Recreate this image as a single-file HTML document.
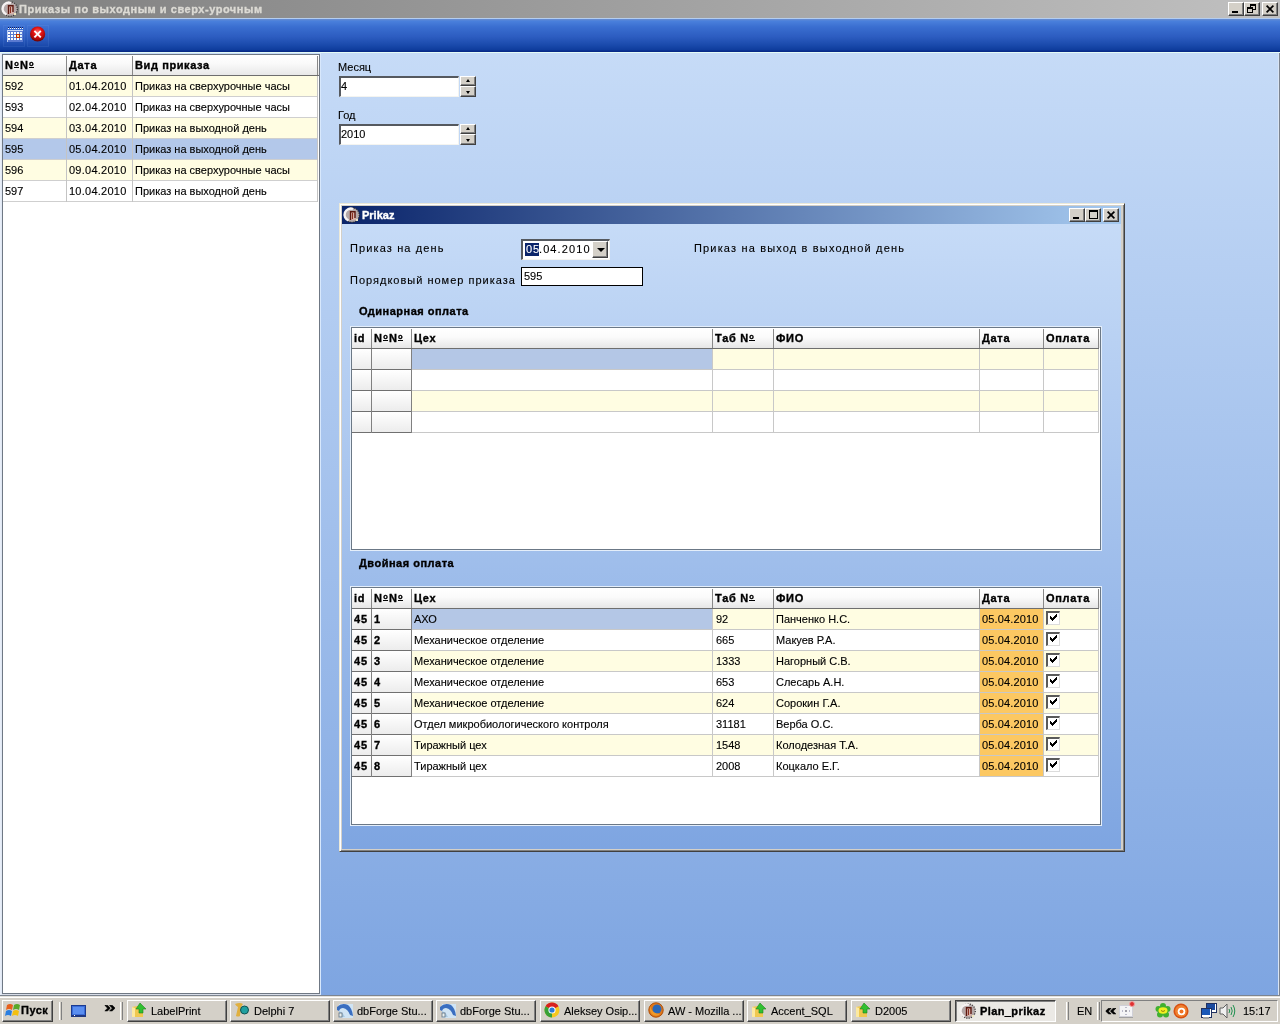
<!DOCTYPE html><html><head><meta charset="utf-8"><style>
html,body{margin:0;padding:0}
body{width:1280px;height:1024px;overflow:hidden;position:relative;font-family:"Liberation Sans",sans-serif;font-size:11px;color:#000;background:#7fa4e0}
div{position:absolute;box-sizing:border-box}
.t{white-space:nowrap;line-height:13px;height:13px;-webkit-text-stroke:0.12px currentColor}
.b{font-weight:bold}
.no{position:relative;display:inline-block;font-size:7.5px;line-height:5px;height:6px;border-bottom:1px solid currentColor;vertical-align:3px;margin-left:0.5px;margin-right:0.5px}
[style*="font-weight:bold"]{-webkit-text-stroke:0.35px currentColor}
.btn{background:#d4d0c8;border-top:1px solid #fff;border-left:1px solid #fff;border-right:1px solid #404040;border-bottom:1px solid #404040;box-shadow:inset -1px -1px 0 #808080}
svg{position:absolute;left:0;top:0;overflow:visible}
</style></head><body><div id="root" style="left:0;top:0;width:1280px;height:1024px;will-change:transform">
<div style="left:0px;top:0px;width:1280px;height:18px;background:linear-gradient(to right,#808080,#c0c0c0)"></div>
<div style="left:2px;top:1px;width:16px;height:16px;"><svg width="16" height="16"><circle cx="8" cy="8" r="7.3" fill="#b4a8a8" stroke="#2a2a2a" stroke-width="1.1" stroke-dasharray="1.2 1.2"/><path d="M4.5 13.5 A6 6 0 0 1 9 2" stroke="#f6f2f2" stroke-width="2.4" fill="none"/><rect x="5.5" y="4" width="6" height="9" fill="#d8b0a8"/><path d="M6.5 13 V4.8 H11 V11" stroke="#5a1810" stroke-width="1.4" fill="none"/><path d="M8.5 6 V12" stroke="#8a3020" stroke-width="1" fill="none"/><rect x="12" y="12" width="2" height="2" fill="#f0e8c0"/></svg></div>
<div class="t" style="left:19px;top:3px;font-weight:bold;color:#dcdad4;letter-spacing:0.53px">Приказы по выходным и сверх-урочным</div>
<div class="btn" style="left:1228px;top:2px;width:16px;height:14px"><div style="left:3px;top:8px;width:6px;height:2px;background:#000"></div></div>
<div class="btn" style="left:1244px;top:2px;width:16px;height:14px"><div style="left:5px;top:1px;width:6px;height:6px;border:1px solid #000;border-top-width:2px"></div><div style="left:2px;top:4px;width:6px;height:6px;border:1px solid #000;border-top-width:2px;background:#d4d0c8"></div></div>
<div class="btn" style="left:1262px;top:2px;width:16px;height:14px"><svg width="16" height="14"><path d="M3.6 2.6 L10.4 9.4 M10.4 2.6 L3.6 9.4" stroke="#000" stroke-width="1.7" fill="none"/></svg></div>
<div style="left:0px;top:18px;width:1280px;height:1px;background:#b4cdf0"></div>
<div style="left:0px;top:19px;width:1280px;height:33px;background:linear-gradient(to bottom,#6a8ed0 0,#4a80dc 2px,#3a6ed0 8px,#2c5cc0 18px,#1a4aac 26px,#0e3c9c 31px,#082a88 32px,#082a88 33px)"></div>
<div style="left:0px;top:52px;width:1280px;height:1px;background:#e4fbf6"></div>
<div style="left:3px;top:25px;width:22px;height:22px;border:1px solid rgba(160,200,255,0.09);background:rgba(120,170,255,0.03)"></div>
<div style="left:27px;top:25px;width:22px;height:22px;border:1px solid rgba(160,200,255,0.09);background:rgba(120,170,255,0.03)"></div>
<div style="left:7px;top:27px;width:18px;height:16px;"><svg width="18" height="16" shape-rendering="crispEdges"><rect x="1" y="0" width="1" height="1" fill="#0a1a60"/><rect x="1" y="1" width="1" height="1" fill="#ffffff"/><rect x="3" y="0" width="1" height="1" fill="#0a1a60"/><rect x="3" y="1" width="1" height="1" fill="#ffffff"/><rect x="5" y="0" width="1" height="1" fill="#0a1a60"/><rect x="5" y="1" width="1" height="1" fill="#ffffff"/><rect x="7" y="0" width="1" height="1" fill="#0a1a60"/><rect x="7" y="1" width="1" height="1" fill="#ffffff"/><rect x="9" y="0" width="1" height="1" fill="#0a1a60"/><rect x="9" y="1" width="1" height="1" fill="#ffffff"/><rect x="11" y="0" width="1" height="1" fill="#0a1a60"/><rect x="11" y="1" width="1" height="1" fill="#ffffff"/><rect x="13" y="0" width="1" height="1" fill="#0a1a60"/><rect x="13" y="1" width="1" height="1" fill="#ffffff"/><rect x="15" y="0" width="1" height="1" fill="#0a1a60"/><rect x="15" y="1" width="1" height="1" fill="#ffffff"/><rect x="0" y="3" width="16" height="1" fill="#c8d8f8"/><rect x="0" y="3" width="1" height="12" fill="#b8ccf0"/><rect x="1" y="4" width="15" height="11" fill="#5a7ad0"/><rect x="1" y="5" width="2" height="2" fill="#ffffff"/><rect x="4" y="5" width="2" height="2" fill="#ffffff"/><rect x="7" y="5" width="2" height="2" fill="#ffffff"/><rect x="10" y="5" width="2" height="2" fill="#ffffff"/><rect x="13" y="5" width="2" height="2" fill="#e0f4ff"/><rect x="1" y="8" width="2" height="2" fill="#ffffff"/><rect x="4" y="8" width="2" height="2" fill="#ffffff"/><rect x="7" y="8" width="2" height="2" fill="#ffffff"/><rect x="10" y="8" width="2" height="2" fill="#f8e0a0"/><rect x="13" y="8" width="2" height="2" fill="#e0f4ff"/><rect x="1" y="11" width="2" height="2" fill="#ffffff"/><rect x="4" y="11" width="2" height="2" fill="#ffffff"/><rect x="7" y="11" width="2" height="2" fill="#ffffff"/><rect x="10" y="11" width="2" height="2" fill="#ffffff"/><rect x="13" y="11" width="2" height="2" fill="#e0f4ff"/><rect x="10" y="7" width="3" height="1" fill="#c03000"/><rect x="10" y="10" width="3" height="1" fill="#c03000"/><rect x="9" y="7" width="1" height="4" fill="#c03000"/><rect x="12" y="7" width="1" height="4" fill="#c03000"/></svg></div>
<div style="left:30px;top:26px;width:16px;height:16px;"><svg width="16" height="16"><defs><radialGradient id="rg" cx="50%" cy="35%" r="60%"><stop offset="0" stop-color="#ff6a6a"/><stop offset="0.45" stop-color="#e41414"/><stop offset="0.85" stop-color="#a80808"/><stop offset="1" stop-color="#700404"/></radialGradient></defs><circle cx="7.6" cy="8" r="7.6" fill="url(#rg)"/><path d="M4.4 4.8 L10.8 11.4 M10.8 4.8 L4.4 11.4" stroke="#fff" stroke-width="1.9" fill="none"/></svg></div>
<div style="left:0px;top:53px;width:1280px;height:942px;background:linear-gradient(to bottom,#c6dbf7 0,#7ea5e1 100%)"></div>
<div style="left:1278px;top:53px;width:1px;height:942px;background:#d8e4f4"></div>
<div style="left:1279px;top:53px;width:1px;height:943px;background:#7c8490"></div>
<div style="left:0px;top:995px;width:1280px;height:1px;background:#7c8490"></div>
<div style="left:0px;top:53px;width:1px;height:942px;background:#e8eef8"></div>
<div style="left:1px;top:53px;width:1px;height:942px;background:#e0e8f4"></div>
<div style="left:2px;top:54px;width:318px;height:940px;background:#fff;border:1px solid #6f7884"></div>
<div style="left:320px;top:53px;width:1px;height:942px;background:#d8e8fc"></div>
<div style="left:2px;top:994px;width:318px;height:1px;background:#d8dde8"></div>
<div style="left:3px;top:55px;width:316px;height:20px;background:linear-gradient(to bottom,#ffffff 0,#fafafa 40%,#e8e8e8 100%)"></div>
<div style="left:3px;top:75px;width:316px;height:1px;background:#6e6e6e"></div>
<div style="left:66px;top:56px;width:1px;height:19px;background:#888"></div>
<div style="left:132px;top:56px;width:1px;height:19px;background:#888"></div>
<div style="left:317px;top:56px;width:1px;height:19px;background:#888"></div>
<div class="t" style="left:5px;top:59px;font-weight:bold;letter-spacing:0.7px">N<span class='no'>o</span>N<span class='no'>o</span></div>
<div class="t" style="left:69px;top:59px;font-weight:bold;letter-spacing:0.7px">Дата</div>
<div class="t" style="left:135px;top:59px;font-weight:bold;letter-spacing:0.6px">Вид приказа</div>
<div style="left:3px;top:76px;width:314px;height:20px;background:#fffde2"></div>
<div style="left:3px;top:96px;width:315px;height:1px;background:#cfcfcf"></div>
<div style="left:66px;top:76px;width:1px;height:21px;background:#c4c4c4"></div>
<div style="left:132px;top:76px;width:1px;height:21px;background:#c4c4c4"></div>
<div style="left:317px;top:76px;width:1px;height:21px;background:#c4c4c4"></div>
<div class="t" style="left:5px;top:80px;">592</div>
<div class="t" style="left:69px;top:80px;letter-spacing:0.25px">01.04.2010</div>
<div class="t" style="left:135px;top:80px;">Приказ на сверхурочные часы</div>
<div style="left:3px;top:97px;width:314px;height:20px;background:#ffffff"></div>
<div style="left:3px;top:117px;width:315px;height:1px;background:#cfcfcf"></div>
<div style="left:66px;top:97px;width:1px;height:21px;background:#c4c4c4"></div>
<div style="left:132px;top:97px;width:1px;height:21px;background:#c4c4c4"></div>
<div style="left:317px;top:97px;width:1px;height:21px;background:#c4c4c4"></div>
<div class="t" style="left:5px;top:101px;">593</div>
<div class="t" style="left:69px;top:101px;letter-spacing:0.25px">02.04.2010</div>
<div class="t" style="left:135px;top:101px;">Приказ на сверхурочные часы</div>
<div style="left:3px;top:118px;width:314px;height:20px;background:#fffde2"></div>
<div style="left:3px;top:138px;width:315px;height:1px;background:#cfcfcf"></div>
<div style="left:66px;top:118px;width:1px;height:21px;background:#c4c4c4"></div>
<div style="left:132px;top:118px;width:1px;height:21px;background:#c4c4c4"></div>
<div style="left:317px;top:118px;width:1px;height:21px;background:#c4c4c4"></div>
<div class="t" style="left:5px;top:122px;">594</div>
<div class="t" style="left:69px;top:122px;letter-spacing:0.25px">03.04.2010</div>
<div class="t" style="left:135px;top:122px;">Приказ на выходной день</div>
<div style="left:3px;top:139px;width:314px;height:20px;background:#b3c8ea"></div>
<div style="left:3px;top:159px;width:315px;height:1px;background:#cfcfcf"></div>
<div style="left:66px;top:139px;width:1px;height:21px;background:#c4c4c4"></div>
<div style="left:132px;top:139px;width:1px;height:21px;background:#c4c4c4"></div>
<div style="left:317px;top:139px;width:1px;height:21px;background:#c4c4c4"></div>
<div class="t" style="left:5px;top:143px;">595</div>
<div class="t" style="left:69px;top:143px;letter-spacing:0.25px">05.04.2010</div>
<div class="t" style="left:135px;top:143px;">Приказ на выходной день</div>
<div style="left:3px;top:160px;width:314px;height:20px;background:#fffde2"></div>
<div style="left:3px;top:180px;width:315px;height:1px;background:#cfcfcf"></div>
<div style="left:66px;top:160px;width:1px;height:21px;background:#c4c4c4"></div>
<div style="left:132px;top:160px;width:1px;height:21px;background:#c4c4c4"></div>
<div style="left:317px;top:160px;width:1px;height:21px;background:#c4c4c4"></div>
<div class="t" style="left:5px;top:164px;">596</div>
<div class="t" style="left:69px;top:164px;letter-spacing:0.25px">09.04.2010</div>
<div class="t" style="left:135px;top:164px;">Приказ на сверхурочные часы</div>
<div style="left:3px;top:181px;width:314px;height:20px;background:#ffffff"></div>
<div style="left:3px;top:201px;width:315px;height:1px;background:#cfcfcf"></div>
<div style="left:66px;top:181px;width:1px;height:21px;background:#c4c4c4"></div>
<div style="left:132px;top:181px;width:1px;height:21px;background:#c4c4c4"></div>
<div style="left:317px;top:181px;width:1px;height:21px;background:#c4c4c4"></div>
<div class="t" style="left:5px;top:185px;">597</div>
<div class="t" style="left:69px;top:185px;letter-spacing:0.25px">10.04.2010</div>
<div class="t" style="left:135px;top:185px;">Приказ на выходной день</div>
<div class="t" style="left:338px;top:61px;">Месяц</div>
<div style="left:339px;top:76px;width:120px;height:21px;background:#fff;border-top:2px solid #55595f;border-left:2px solid #55595f;border-bottom:1px solid #f4f4f0;border-right:1px solid #f4f4f0"></div>
<div class="t" style="left:341px;top:80px;">4</div>
<div class="btn" style="left:460px;top:76px;width:16px;height:10px"><div style="left:5px;top:2px;width:0;height:0;border-left:2.5px solid transparent;border-right:2.5px solid transparent;border-bottom:3px solid #000"></div></div>
<div class="btn" style="left:460px;top:86px;width:16px;height:11px"><div style="left:5px;top:4px;width:0;height:0;border-left:2.5px solid transparent;border-right:2.5px solid transparent;border-top:3px solid #000"></div></div>
<div class="t" style="left:338px;top:109px;">Год</div>
<div style="left:339px;top:124px;width:120px;height:21px;background:#fff;border-top:2px solid #55595f;border-left:2px solid #55595f;border-bottom:1px solid #f4f4f0;border-right:1px solid #f4f4f0"></div>
<div class="t" style="left:341px;top:128px;">2010</div>
<div class="btn" style="left:460px;top:124px;width:16px;height:10px"><div style="left:5px;top:2px;width:0;height:0;border-left:2.5px solid transparent;border-right:2.5px solid transparent;border-bottom:3px solid #000"></div></div>
<div class="btn" style="left:460px;top:134px;width:16px;height:11px"><div style="left:5px;top:4px;width:0;height:0;border-left:2.5px solid transparent;border-right:2.5px solid transparent;border-top:3px solid #000"></div></div>
<div style="left:339px;top:203px;width:786px;height:649px;background:#d4d0c8;border-top:1px solid #ece9d8;border-left:1px solid #ece9d8;border-right:1px solid #404040;border-bottom:1px solid #404040;box-shadow:inset 1px 1px 0 #fff, inset -1px -1px 0 #808080"></div>
<div style="left:342px;top:206px;width:779px;height:18px;background:linear-gradient(to right,#0a246a,#a6caf0)"></div>
<div style="left:344px;top:207px;width:16px;height:16px;"><svg width="16" height="16"><circle cx="8" cy="8" r="7.3" fill="#b4a8a8" stroke="#2a2a2a" stroke-width="1.1" stroke-dasharray="1.2 1.2"/><path d="M4.5 13.5 A6 6 0 0 1 9 2" stroke="#f6f2f2" stroke-width="2.4" fill="none"/><rect x="5.5" y="4" width="6" height="9" fill="#d8b0a8"/><path d="M6.5 13 V4.8 H11 V11" stroke="#5a1810" stroke-width="1.4" fill="none"/><path d="M8.5 6 V12" stroke="#8a3020" stroke-width="1" fill="none"/><rect x="12" y="12" width="2" height="2" fill="#f0e8c0"/></svg></div>
<div class="t" style="left:362px;top:209px;font-weight:bold;color:#fff;font-size:11px">Prikaz</div>
<div class="btn" style="left:1069px;top:208px;width:16px;height:14px"><div style="left:3px;top:8px;width:6px;height:2px;background:#000"></div></div>
<div class="btn" style="left:1085px;top:208px;width:16px;height:14px"><div style="left:3px;top:1px;width:9px;height:9px;border:1px solid #000;border-top-width:2px"></div></div>
<div class="btn" style="left:1103px;top:208px;width:16px;height:14px"><svg width="16" height="14"><path d="M3.6 2.6 L10.4 9.4 M10.4 2.6 L3.6 9.4" stroke="#000" stroke-width="1.7" fill="none"/></svg></div>
<div style="left:342px;top:224px;width:779px;height:625px;background:linear-gradient(to bottom,#c6dbf7 0,#7ea5e1 100%)"></div>
<div class="t" style="left:350px;top:242px;letter-spacing:1.12px">Приказ на день</div>
<div class="t" style="left:350px;top:274px;letter-spacing:1px">Порядковый номер приказа</div>
<div class="t" style="left:694px;top:242px;letter-spacing:1.16px">Приказ на выход в выходной день</div>
<div style="left:521px;top:239px;width:89px;height:21px;background:#fff;border-top:2px solid #55595f;border-left:2px solid #55595f;border-bottom:1px solid #f4f4f0;border-right:1px solid #f4f4f0"></div>
<div style="left:525px;top:243px;width:14px;height:13px;background:#0a246a"></div>
<div class="t" style="left:526px;top:243px;color:#fff;letter-spacing:1px">05</div>
<div class="t" style="left:539px;top:243px;letter-spacing:1.1px">.04.2010</div>
<div class="btn" style="left:592px;top:241px;width:16px;height:17px"><div style="left:3.5px;top:6px;width:0;height:0;border-left:4px solid transparent;border-right:4px solid transparent;border-top:4px solid #000"></div></div>
<div style="left:521px;top:267px;width:122px;height:19px;background:#fff;border:1px solid #000"></div>
<div class="t" style="left:524px;top:270px;">595</div>
<div class="t" style="left:359px;top:305px;font-weight:bold;letter-spacing:0.5px">Одинарная оплата</div>
<div style="left:350px;top:326px;width:752px;height:225px;background:#e4eefa"></div>
<div style="left:351px;top:327px;width:750px;height:223px;background:#fff;border:1px solid #6b7886"></div>
<div style="left:352px;top:328px;width:748px;height:20px;background:linear-gradient(to bottom,#ffffff 0,#fbfbfb 45%,#e6e6e6 100%)"></div>
<div style="left:352px;top:348px;width:747px;height:1px;background:#6e6e6e"></div>
<div style="left:371px;top:329px;width:1px;height:19px;background:#888"></div>
<div style="left:411px;top:329px;width:1px;height:19px;background:#888"></div>
<div style="left:712px;top:329px;width:1px;height:19px;background:#888"></div>
<div style="left:773px;top:329px;width:1px;height:19px;background:#888"></div>
<div style="left:979px;top:329px;width:1px;height:19px;background:#888"></div>
<div style="left:1043px;top:329px;width:1px;height:19px;background:#888"></div>
<div style="left:1098px;top:329px;width:1px;height:19px;background:#888"></div>
<div class="t" style="left:354px;top:332px;font-weight:bold;letter-spacing:0.7px">id</div>
<div class="t" style="left:374px;top:332px;font-weight:bold;letter-spacing:0.7px">N<span class='no'>o</span>N<span class='no'>o</span></div>
<div class="t" style="left:414px;top:332px;font-weight:bold;letter-spacing:0.7px">Цех</div>
<div class="t" style="left:715px;top:332px;font-weight:bold;letter-spacing:0.7px">Таб N<span class='no'>o</span></div>
<div class="t" style="left:776px;top:332px;font-weight:bold;letter-spacing:0.7px">ФИО</div>
<div class="t" style="left:982px;top:332px;font-weight:bold;letter-spacing:0.7px">Дата</div>
<div class="t" style="left:1046px;top:332px;font-weight:bold;letter-spacing:0.7px">Оплата</div>
<div style="left:411px;top:349px;width:687px;height:20px;background:#fffde2"></div>
<div style="left:352px;top:349px;width:19px;height:20px;background:linear-gradient(to bottom,#ffffff,#ececec)"></div>
<div style="left:372px;top:349px;width:39px;height:20px;background:linear-gradient(to bottom,#ffffff,#ececec)"></div>
<div style="left:352px;top:369px;width:747px;height:1px;background:#c8c8c8"></div>
<div style="left:352px;top:369px;width:59px;height:1px;background:#707070"></div>
<div style="left:371px;top:349px;width:1px;height:21px;background:#808080"></div>
<div style="left:411px;top:349px;width:1px;height:21px;background:#808080"></div>
<div style="left:712px;top:349px;width:1px;height:21px;background:#c8c8c8"></div>
<div style="left:773px;top:349px;width:1px;height:21px;background:#c8c8c8"></div>
<div style="left:979px;top:349px;width:1px;height:21px;background:#c8c8c8"></div>
<div style="left:1043px;top:349px;width:1px;height:21px;background:#c8c8c8"></div>
<div style="left:1098px;top:349px;width:1px;height:21px;background:#c8c8c8"></div>
<div style="left:411px;top:370px;width:687px;height:20px;background:#ffffff"></div>
<div style="left:352px;top:370px;width:19px;height:20px;background:linear-gradient(to bottom,#ffffff,#ececec)"></div>
<div style="left:372px;top:370px;width:39px;height:20px;background:linear-gradient(to bottom,#ffffff,#ececec)"></div>
<div style="left:352px;top:390px;width:747px;height:1px;background:#c8c8c8"></div>
<div style="left:352px;top:390px;width:59px;height:1px;background:#707070"></div>
<div style="left:371px;top:370px;width:1px;height:21px;background:#808080"></div>
<div style="left:411px;top:370px;width:1px;height:21px;background:#808080"></div>
<div style="left:712px;top:370px;width:1px;height:21px;background:#c8c8c8"></div>
<div style="left:773px;top:370px;width:1px;height:21px;background:#c8c8c8"></div>
<div style="left:979px;top:370px;width:1px;height:21px;background:#c8c8c8"></div>
<div style="left:1043px;top:370px;width:1px;height:21px;background:#c8c8c8"></div>
<div style="left:1098px;top:370px;width:1px;height:21px;background:#c8c8c8"></div>
<div style="left:411px;top:391px;width:687px;height:20px;background:#fffde2"></div>
<div style="left:352px;top:391px;width:19px;height:20px;background:linear-gradient(to bottom,#ffffff,#ececec)"></div>
<div style="left:372px;top:391px;width:39px;height:20px;background:linear-gradient(to bottom,#ffffff,#ececec)"></div>
<div style="left:352px;top:411px;width:747px;height:1px;background:#c8c8c8"></div>
<div style="left:352px;top:411px;width:59px;height:1px;background:#707070"></div>
<div style="left:371px;top:391px;width:1px;height:21px;background:#808080"></div>
<div style="left:411px;top:391px;width:1px;height:21px;background:#808080"></div>
<div style="left:712px;top:391px;width:1px;height:21px;background:#c8c8c8"></div>
<div style="left:773px;top:391px;width:1px;height:21px;background:#c8c8c8"></div>
<div style="left:979px;top:391px;width:1px;height:21px;background:#c8c8c8"></div>
<div style="left:1043px;top:391px;width:1px;height:21px;background:#c8c8c8"></div>
<div style="left:1098px;top:391px;width:1px;height:21px;background:#c8c8c8"></div>
<div style="left:411px;top:412px;width:687px;height:20px;background:#ffffff"></div>
<div style="left:352px;top:412px;width:19px;height:20px;background:linear-gradient(to bottom,#ffffff,#ececec)"></div>
<div style="left:372px;top:412px;width:39px;height:20px;background:linear-gradient(to bottom,#ffffff,#ececec)"></div>
<div style="left:352px;top:432px;width:747px;height:1px;background:#c8c8c8"></div>
<div style="left:352px;top:432px;width:59px;height:1px;background:#707070"></div>
<div style="left:371px;top:412px;width:1px;height:21px;background:#808080"></div>
<div style="left:411px;top:412px;width:1px;height:21px;background:#808080"></div>
<div style="left:712px;top:412px;width:1px;height:21px;background:#c8c8c8"></div>
<div style="left:773px;top:412px;width:1px;height:21px;background:#c8c8c8"></div>
<div style="left:979px;top:412px;width:1px;height:21px;background:#c8c8c8"></div>
<div style="left:1043px;top:412px;width:1px;height:21px;background:#c8c8c8"></div>
<div style="left:1098px;top:412px;width:1px;height:21px;background:#c8c8c8"></div>
<div style="left:412px;top:349px;width:300px;height:20px;background:#b4c7e6"></div>
<div class="t" style="left:359px;top:557px;font-weight:bold;letter-spacing:0.5px">Двойная оплата</div>
<div style="left:350px;top:586px;width:752px;height:240px;background:#e4eefa"></div>
<div style="left:351px;top:587px;width:750px;height:238px;background:#fff;border:1px solid #6b7886"></div>
<div style="left:352px;top:588px;width:748px;height:20px;background:linear-gradient(to bottom,#ffffff 0,#fbfbfb 45%,#e6e6e6 100%)"></div>
<div style="left:352px;top:608px;width:747px;height:1px;background:#6e6e6e"></div>
<div style="left:371px;top:589px;width:1px;height:19px;background:#888"></div>
<div style="left:411px;top:589px;width:1px;height:19px;background:#888"></div>
<div style="left:712px;top:589px;width:1px;height:19px;background:#888"></div>
<div style="left:773px;top:589px;width:1px;height:19px;background:#888"></div>
<div style="left:979px;top:589px;width:1px;height:19px;background:#888"></div>
<div style="left:1043px;top:589px;width:1px;height:19px;background:#888"></div>
<div style="left:1098px;top:589px;width:1px;height:19px;background:#888"></div>
<div class="t" style="left:354px;top:592px;font-weight:bold;letter-spacing:0.7px">id</div>
<div class="t" style="left:374px;top:592px;font-weight:bold;letter-spacing:0.7px">N<span class='no'>o</span>N<span class='no'>o</span></div>
<div class="t" style="left:414px;top:592px;font-weight:bold;letter-spacing:0.7px">Цех</div>
<div class="t" style="left:715px;top:592px;font-weight:bold;letter-spacing:0.7px">Таб N<span class='no'>o</span></div>
<div class="t" style="left:776px;top:592px;font-weight:bold;letter-spacing:0.7px">ФИО</div>
<div class="t" style="left:982px;top:592px;font-weight:bold;letter-spacing:0.7px">Дата</div>
<div class="t" style="left:1046px;top:592px;font-weight:bold;letter-spacing:0.7px">Оплата</div>
<div style="left:411px;top:609px;width:687px;height:20px;background:#fffde2"></div>
<div style="left:352px;top:609px;width:19px;height:20px;background:linear-gradient(to bottom,#ffffff,#ececec)"></div>
<div style="left:372px;top:609px;width:39px;height:20px;background:linear-gradient(to bottom,#ffffff,#ececec)"></div>
<div style="left:352px;top:629px;width:747px;height:1px;background:#c8c8c8"></div>
<div style="left:352px;top:629px;width:59px;height:1px;background:#707070"></div>
<div style="left:371px;top:609px;width:1px;height:21px;background:#808080"></div>
<div style="left:411px;top:609px;width:1px;height:21px;background:#808080"></div>
<div style="left:712px;top:609px;width:1px;height:21px;background:#c8c8c8"></div>
<div style="left:773px;top:609px;width:1px;height:21px;background:#c8c8c8"></div>
<div style="left:979px;top:609px;width:1px;height:21px;background:#c8c8c8"></div>
<div style="left:1043px;top:609px;width:1px;height:21px;background:#c8c8c8"></div>
<div style="left:1098px;top:609px;width:1px;height:21px;background:#c8c8c8"></div>
<div style="left:980px;top:609px;width:63px;height:20px;background:#fcc862"></div>
<div class="t" style="left:354px;top:613px;font-weight:bold;letter-spacing:0.8px">45</div>
<div class="t" style="left:374px;top:613px;font-weight:bold">1</div>
<div class="t" style="left:414px;top:613px;">АХО</div>
<div class="t" style="left:716px;top:613px;">92</div>
<div class="t" style="left:776px;top:613px;">Панченко Н.С.</div>
<div class="t" style="left:982px;top:613px;letter-spacing:0.15px">05.04.2010</div>
<div style="left:1046px;top:611px;width:14px;height:14px;background:#fff;border-top:2px solid #5a5a5a;border-left:2px solid #5a5a5a;border-right:1px solid #dcdcdc;border-bottom:1px solid #dcdcdc"><svg width="7" height="7" style="left:2px;top:1px" shape-rendering="crispEdges" fill="#000"><rect x="6" y="0" width="1" height="1"/><rect x="5" y="1" width="1" height="1"/><rect x="6" y="1" width="1" height="1"/><rect x="0" y="2" width="1" height="1"/><rect x="4" y="2" width="1" height="1"/><rect x="5" y="2" width="1" height="1"/><rect x="6" y="2" width="1" height="1"/><rect x="0" y="3" width="1" height="1"/><rect x="1" y="3" width="1" height="1"/><rect x="3" y="3" width="1" height="1"/><rect x="4" y="3" width="1" height="1"/><rect x="5" y="3" width="1" height="1"/><rect x="0" y="4" width="1" height="1"/><rect x="1" y="4" width="1" height="1"/><rect x="2" y="4" width="1" height="1"/><rect x="3" y="4" width="1" height="1"/><rect x="4" y="4" width="1" height="1"/><rect x="1" y="5" width="1" height="1"/><rect x="2" y="5" width="1" height="1"/><rect x="3" y="5" width="1" height="1"/><rect x="2" y="6" width="1" height="1"/></svg></div>
<div style="left:411px;top:630px;width:687px;height:20px;background:#ffffff"></div>
<div style="left:352px;top:630px;width:19px;height:20px;background:linear-gradient(to bottom,#ffffff,#ececec)"></div>
<div style="left:372px;top:630px;width:39px;height:20px;background:linear-gradient(to bottom,#ffffff,#ececec)"></div>
<div style="left:352px;top:650px;width:747px;height:1px;background:#c8c8c8"></div>
<div style="left:352px;top:650px;width:59px;height:1px;background:#707070"></div>
<div style="left:371px;top:630px;width:1px;height:21px;background:#808080"></div>
<div style="left:411px;top:630px;width:1px;height:21px;background:#808080"></div>
<div style="left:712px;top:630px;width:1px;height:21px;background:#c8c8c8"></div>
<div style="left:773px;top:630px;width:1px;height:21px;background:#c8c8c8"></div>
<div style="left:979px;top:630px;width:1px;height:21px;background:#c8c8c8"></div>
<div style="left:1043px;top:630px;width:1px;height:21px;background:#c8c8c8"></div>
<div style="left:1098px;top:630px;width:1px;height:21px;background:#c8c8c8"></div>
<div style="left:980px;top:630px;width:63px;height:20px;background:#fcc862"></div>
<div class="t" style="left:354px;top:634px;font-weight:bold;letter-spacing:0.8px">45</div>
<div class="t" style="left:374px;top:634px;font-weight:bold">2</div>
<div class="t" style="left:414px;top:634px;">Механическое отделение</div>
<div class="t" style="left:716px;top:634px;">665</div>
<div class="t" style="left:776px;top:634px;">Макуев Р.А.</div>
<div class="t" style="left:982px;top:634px;letter-spacing:0.15px">05.04.2010</div>
<div style="left:1046px;top:632px;width:14px;height:14px;background:#fff;border-top:2px solid #5a5a5a;border-left:2px solid #5a5a5a;border-right:1px solid #dcdcdc;border-bottom:1px solid #dcdcdc"><svg width="7" height="7" style="left:2px;top:1px" shape-rendering="crispEdges" fill="#000"><rect x="6" y="0" width="1" height="1"/><rect x="5" y="1" width="1" height="1"/><rect x="6" y="1" width="1" height="1"/><rect x="0" y="2" width="1" height="1"/><rect x="4" y="2" width="1" height="1"/><rect x="5" y="2" width="1" height="1"/><rect x="6" y="2" width="1" height="1"/><rect x="0" y="3" width="1" height="1"/><rect x="1" y="3" width="1" height="1"/><rect x="3" y="3" width="1" height="1"/><rect x="4" y="3" width="1" height="1"/><rect x="5" y="3" width="1" height="1"/><rect x="0" y="4" width="1" height="1"/><rect x="1" y="4" width="1" height="1"/><rect x="2" y="4" width="1" height="1"/><rect x="3" y="4" width="1" height="1"/><rect x="4" y="4" width="1" height="1"/><rect x="1" y="5" width="1" height="1"/><rect x="2" y="5" width="1" height="1"/><rect x="3" y="5" width="1" height="1"/><rect x="2" y="6" width="1" height="1"/></svg></div>
<div style="left:411px;top:651px;width:687px;height:20px;background:#fffde2"></div>
<div style="left:352px;top:651px;width:19px;height:20px;background:linear-gradient(to bottom,#ffffff,#ececec)"></div>
<div style="left:372px;top:651px;width:39px;height:20px;background:linear-gradient(to bottom,#ffffff,#ececec)"></div>
<div style="left:352px;top:671px;width:747px;height:1px;background:#c8c8c8"></div>
<div style="left:352px;top:671px;width:59px;height:1px;background:#707070"></div>
<div style="left:371px;top:651px;width:1px;height:21px;background:#808080"></div>
<div style="left:411px;top:651px;width:1px;height:21px;background:#808080"></div>
<div style="left:712px;top:651px;width:1px;height:21px;background:#c8c8c8"></div>
<div style="left:773px;top:651px;width:1px;height:21px;background:#c8c8c8"></div>
<div style="left:979px;top:651px;width:1px;height:21px;background:#c8c8c8"></div>
<div style="left:1043px;top:651px;width:1px;height:21px;background:#c8c8c8"></div>
<div style="left:1098px;top:651px;width:1px;height:21px;background:#c8c8c8"></div>
<div style="left:980px;top:651px;width:63px;height:20px;background:#fcc862"></div>
<div class="t" style="left:354px;top:655px;font-weight:bold;letter-spacing:0.8px">45</div>
<div class="t" style="left:374px;top:655px;font-weight:bold">3</div>
<div class="t" style="left:414px;top:655px;">Механическое отделение</div>
<div class="t" style="left:716px;top:655px;">1333</div>
<div class="t" style="left:776px;top:655px;">Нагорный С.В.</div>
<div class="t" style="left:982px;top:655px;letter-spacing:0.15px">05.04.2010</div>
<div style="left:1046px;top:653px;width:14px;height:14px;background:#fff;border-top:2px solid #5a5a5a;border-left:2px solid #5a5a5a;border-right:1px solid #dcdcdc;border-bottom:1px solid #dcdcdc"><svg width="7" height="7" style="left:2px;top:1px" shape-rendering="crispEdges" fill="#000"><rect x="6" y="0" width="1" height="1"/><rect x="5" y="1" width="1" height="1"/><rect x="6" y="1" width="1" height="1"/><rect x="0" y="2" width="1" height="1"/><rect x="4" y="2" width="1" height="1"/><rect x="5" y="2" width="1" height="1"/><rect x="6" y="2" width="1" height="1"/><rect x="0" y="3" width="1" height="1"/><rect x="1" y="3" width="1" height="1"/><rect x="3" y="3" width="1" height="1"/><rect x="4" y="3" width="1" height="1"/><rect x="5" y="3" width="1" height="1"/><rect x="0" y="4" width="1" height="1"/><rect x="1" y="4" width="1" height="1"/><rect x="2" y="4" width="1" height="1"/><rect x="3" y="4" width="1" height="1"/><rect x="4" y="4" width="1" height="1"/><rect x="1" y="5" width="1" height="1"/><rect x="2" y="5" width="1" height="1"/><rect x="3" y="5" width="1" height="1"/><rect x="2" y="6" width="1" height="1"/></svg></div>
<div style="left:411px;top:672px;width:687px;height:20px;background:#ffffff"></div>
<div style="left:352px;top:672px;width:19px;height:20px;background:linear-gradient(to bottom,#ffffff,#ececec)"></div>
<div style="left:372px;top:672px;width:39px;height:20px;background:linear-gradient(to bottom,#ffffff,#ececec)"></div>
<div style="left:352px;top:692px;width:747px;height:1px;background:#c8c8c8"></div>
<div style="left:352px;top:692px;width:59px;height:1px;background:#707070"></div>
<div style="left:371px;top:672px;width:1px;height:21px;background:#808080"></div>
<div style="left:411px;top:672px;width:1px;height:21px;background:#808080"></div>
<div style="left:712px;top:672px;width:1px;height:21px;background:#c8c8c8"></div>
<div style="left:773px;top:672px;width:1px;height:21px;background:#c8c8c8"></div>
<div style="left:979px;top:672px;width:1px;height:21px;background:#c8c8c8"></div>
<div style="left:1043px;top:672px;width:1px;height:21px;background:#c8c8c8"></div>
<div style="left:1098px;top:672px;width:1px;height:21px;background:#c8c8c8"></div>
<div style="left:980px;top:672px;width:63px;height:20px;background:#fcc862"></div>
<div class="t" style="left:354px;top:676px;font-weight:bold;letter-spacing:0.8px">45</div>
<div class="t" style="left:374px;top:676px;font-weight:bold">4</div>
<div class="t" style="left:414px;top:676px;">Механическое отделение</div>
<div class="t" style="left:716px;top:676px;">653</div>
<div class="t" style="left:776px;top:676px;">Слесарь А.Н.</div>
<div class="t" style="left:982px;top:676px;letter-spacing:0.15px">05.04.2010</div>
<div style="left:1046px;top:674px;width:14px;height:14px;background:#fff;border-top:2px solid #5a5a5a;border-left:2px solid #5a5a5a;border-right:1px solid #dcdcdc;border-bottom:1px solid #dcdcdc"><svg width="7" height="7" style="left:2px;top:1px" shape-rendering="crispEdges" fill="#000"><rect x="6" y="0" width="1" height="1"/><rect x="5" y="1" width="1" height="1"/><rect x="6" y="1" width="1" height="1"/><rect x="0" y="2" width="1" height="1"/><rect x="4" y="2" width="1" height="1"/><rect x="5" y="2" width="1" height="1"/><rect x="6" y="2" width="1" height="1"/><rect x="0" y="3" width="1" height="1"/><rect x="1" y="3" width="1" height="1"/><rect x="3" y="3" width="1" height="1"/><rect x="4" y="3" width="1" height="1"/><rect x="5" y="3" width="1" height="1"/><rect x="0" y="4" width="1" height="1"/><rect x="1" y="4" width="1" height="1"/><rect x="2" y="4" width="1" height="1"/><rect x="3" y="4" width="1" height="1"/><rect x="4" y="4" width="1" height="1"/><rect x="1" y="5" width="1" height="1"/><rect x="2" y="5" width="1" height="1"/><rect x="3" y="5" width="1" height="1"/><rect x="2" y="6" width="1" height="1"/></svg></div>
<div style="left:411px;top:693px;width:687px;height:20px;background:#fffde2"></div>
<div style="left:352px;top:693px;width:19px;height:20px;background:linear-gradient(to bottom,#ffffff,#ececec)"></div>
<div style="left:372px;top:693px;width:39px;height:20px;background:linear-gradient(to bottom,#ffffff,#ececec)"></div>
<div style="left:352px;top:713px;width:747px;height:1px;background:#c8c8c8"></div>
<div style="left:352px;top:713px;width:59px;height:1px;background:#707070"></div>
<div style="left:371px;top:693px;width:1px;height:21px;background:#808080"></div>
<div style="left:411px;top:693px;width:1px;height:21px;background:#808080"></div>
<div style="left:712px;top:693px;width:1px;height:21px;background:#c8c8c8"></div>
<div style="left:773px;top:693px;width:1px;height:21px;background:#c8c8c8"></div>
<div style="left:979px;top:693px;width:1px;height:21px;background:#c8c8c8"></div>
<div style="left:1043px;top:693px;width:1px;height:21px;background:#c8c8c8"></div>
<div style="left:1098px;top:693px;width:1px;height:21px;background:#c8c8c8"></div>
<div style="left:980px;top:693px;width:63px;height:20px;background:#fcc862"></div>
<div class="t" style="left:354px;top:697px;font-weight:bold;letter-spacing:0.8px">45</div>
<div class="t" style="left:374px;top:697px;font-weight:bold">5</div>
<div class="t" style="left:414px;top:697px;">Механическое отделение</div>
<div class="t" style="left:716px;top:697px;">624</div>
<div class="t" style="left:776px;top:697px;">Сорокин Г.А.</div>
<div class="t" style="left:982px;top:697px;letter-spacing:0.15px">05.04.2010</div>
<div style="left:1046px;top:695px;width:14px;height:14px;background:#fff;border-top:2px solid #5a5a5a;border-left:2px solid #5a5a5a;border-right:1px solid #dcdcdc;border-bottom:1px solid #dcdcdc"><svg width="7" height="7" style="left:2px;top:1px" shape-rendering="crispEdges" fill="#000"><rect x="6" y="0" width="1" height="1"/><rect x="5" y="1" width="1" height="1"/><rect x="6" y="1" width="1" height="1"/><rect x="0" y="2" width="1" height="1"/><rect x="4" y="2" width="1" height="1"/><rect x="5" y="2" width="1" height="1"/><rect x="6" y="2" width="1" height="1"/><rect x="0" y="3" width="1" height="1"/><rect x="1" y="3" width="1" height="1"/><rect x="3" y="3" width="1" height="1"/><rect x="4" y="3" width="1" height="1"/><rect x="5" y="3" width="1" height="1"/><rect x="0" y="4" width="1" height="1"/><rect x="1" y="4" width="1" height="1"/><rect x="2" y="4" width="1" height="1"/><rect x="3" y="4" width="1" height="1"/><rect x="4" y="4" width="1" height="1"/><rect x="1" y="5" width="1" height="1"/><rect x="2" y="5" width="1" height="1"/><rect x="3" y="5" width="1" height="1"/><rect x="2" y="6" width="1" height="1"/></svg></div>
<div style="left:411px;top:714px;width:687px;height:20px;background:#ffffff"></div>
<div style="left:352px;top:714px;width:19px;height:20px;background:linear-gradient(to bottom,#ffffff,#ececec)"></div>
<div style="left:372px;top:714px;width:39px;height:20px;background:linear-gradient(to bottom,#ffffff,#ececec)"></div>
<div style="left:352px;top:734px;width:747px;height:1px;background:#c8c8c8"></div>
<div style="left:352px;top:734px;width:59px;height:1px;background:#707070"></div>
<div style="left:371px;top:714px;width:1px;height:21px;background:#808080"></div>
<div style="left:411px;top:714px;width:1px;height:21px;background:#808080"></div>
<div style="left:712px;top:714px;width:1px;height:21px;background:#c8c8c8"></div>
<div style="left:773px;top:714px;width:1px;height:21px;background:#c8c8c8"></div>
<div style="left:979px;top:714px;width:1px;height:21px;background:#c8c8c8"></div>
<div style="left:1043px;top:714px;width:1px;height:21px;background:#c8c8c8"></div>
<div style="left:1098px;top:714px;width:1px;height:21px;background:#c8c8c8"></div>
<div style="left:980px;top:714px;width:63px;height:20px;background:#fcc862"></div>
<div class="t" style="left:354px;top:718px;font-weight:bold;letter-spacing:0.8px">45</div>
<div class="t" style="left:374px;top:718px;font-weight:bold">6</div>
<div class="t" style="left:414px;top:718px;">Отдел микробиологического контроля</div>
<div class="t" style="left:716px;top:718px;">31181</div>
<div class="t" style="left:776px;top:718px;">Верба О.С.</div>
<div class="t" style="left:982px;top:718px;letter-spacing:0.15px">05.04.2010</div>
<div style="left:1046px;top:716px;width:14px;height:14px;background:#fff;border-top:2px solid #5a5a5a;border-left:2px solid #5a5a5a;border-right:1px solid #dcdcdc;border-bottom:1px solid #dcdcdc"><svg width="7" height="7" style="left:2px;top:1px" shape-rendering="crispEdges" fill="#000"><rect x="6" y="0" width="1" height="1"/><rect x="5" y="1" width="1" height="1"/><rect x="6" y="1" width="1" height="1"/><rect x="0" y="2" width="1" height="1"/><rect x="4" y="2" width="1" height="1"/><rect x="5" y="2" width="1" height="1"/><rect x="6" y="2" width="1" height="1"/><rect x="0" y="3" width="1" height="1"/><rect x="1" y="3" width="1" height="1"/><rect x="3" y="3" width="1" height="1"/><rect x="4" y="3" width="1" height="1"/><rect x="5" y="3" width="1" height="1"/><rect x="0" y="4" width="1" height="1"/><rect x="1" y="4" width="1" height="1"/><rect x="2" y="4" width="1" height="1"/><rect x="3" y="4" width="1" height="1"/><rect x="4" y="4" width="1" height="1"/><rect x="1" y="5" width="1" height="1"/><rect x="2" y="5" width="1" height="1"/><rect x="3" y="5" width="1" height="1"/><rect x="2" y="6" width="1" height="1"/></svg></div>
<div style="left:411px;top:735px;width:687px;height:20px;background:#fffde2"></div>
<div style="left:352px;top:735px;width:19px;height:20px;background:linear-gradient(to bottom,#ffffff,#ececec)"></div>
<div style="left:372px;top:735px;width:39px;height:20px;background:linear-gradient(to bottom,#ffffff,#ececec)"></div>
<div style="left:352px;top:755px;width:747px;height:1px;background:#c8c8c8"></div>
<div style="left:352px;top:755px;width:59px;height:1px;background:#707070"></div>
<div style="left:371px;top:735px;width:1px;height:21px;background:#808080"></div>
<div style="left:411px;top:735px;width:1px;height:21px;background:#808080"></div>
<div style="left:712px;top:735px;width:1px;height:21px;background:#c8c8c8"></div>
<div style="left:773px;top:735px;width:1px;height:21px;background:#c8c8c8"></div>
<div style="left:979px;top:735px;width:1px;height:21px;background:#c8c8c8"></div>
<div style="left:1043px;top:735px;width:1px;height:21px;background:#c8c8c8"></div>
<div style="left:1098px;top:735px;width:1px;height:21px;background:#c8c8c8"></div>
<div style="left:980px;top:735px;width:63px;height:20px;background:#fcc862"></div>
<div class="t" style="left:354px;top:739px;font-weight:bold;letter-spacing:0.8px">45</div>
<div class="t" style="left:374px;top:739px;font-weight:bold">7</div>
<div class="t" style="left:414px;top:739px;">Тиражный цех</div>
<div class="t" style="left:716px;top:739px;">1548</div>
<div class="t" style="left:776px;top:739px;">Колодезная Т.А.</div>
<div class="t" style="left:982px;top:739px;letter-spacing:0.15px">05.04.2010</div>
<div style="left:1046px;top:737px;width:14px;height:14px;background:#fff;border-top:2px solid #5a5a5a;border-left:2px solid #5a5a5a;border-right:1px solid #dcdcdc;border-bottom:1px solid #dcdcdc"><svg width="7" height="7" style="left:2px;top:1px" shape-rendering="crispEdges" fill="#000"><rect x="6" y="0" width="1" height="1"/><rect x="5" y="1" width="1" height="1"/><rect x="6" y="1" width="1" height="1"/><rect x="0" y="2" width="1" height="1"/><rect x="4" y="2" width="1" height="1"/><rect x="5" y="2" width="1" height="1"/><rect x="6" y="2" width="1" height="1"/><rect x="0" y="3" width="1" height="1"/><rect x="1" y="3" width="1" height="1"/><rect x="3" y="3" width="1" height="1"/><rect x="4" y="3" width="1" height="1"/><rect x="5" y="3" width="1" height="1"/><rect x="0" y="4" width="1" height="1"/><rect x="1" y="4" width="1" height="1"/><rect x="2" y="4" width="1" height="1"/><rect x="3" y="4" width="1" height="1"/><rect x="4" y="4" width="1" height="1"/><rect x="1" y="5" width="1" height="1"/><rect x="2" y="5" width="1" height="1"/><rect x="3" y="5" width="1" height="1"/><rect x="2" y="6" width="1" height="1"/></svg></div>
<div style="left:411px;top:756px;width:687px;height:20px;background:#ffffff"></div>
<div style="left:352px;top:756px;width:19px;height:20px;background:linear-gradient(to bottom,#ffffff,#ececec)"></div>
<div style="left:372px;top:756px;width:39px;height:20px;background:linear-gradient(to bottom,#ffffff,#ececec)"></div>
<div style="left:352px;top:776px;width:747px;height:1px;background:#c8c8c8"></div>
<div style="left:352px;top:776px;width:59px;height:1px;background:#707070"></div>
<div style="left:371px;top:756px;width:1px;height:21px;background:#808080"></div>
<div style="left:411px;top:756px;width:1px;height:21px;background:#808080"></div>
<div style="left:712px;top:756px;width:1px;height:21px;background:#c8c8c8"></div>
<div style="left:773px;top:756px;width:1px;height:21px;background:#c8c8c8"></div>
<div style="left:979px;top:756px;width:1px;height:21px;background:#c8c8c8"></div>
<div style="left:1043px;top:756px;width:1px;height:21px;background:#c8c8c8"></div>
<div style="left:1098px;top:756px;width:1px;height:21px;background:#c8c8c8"></div>
<div style="left:980px;top:756px;width:63px;height:20px;background:#fcc862"></div>
<div class="t" style="left:354px;top:760px;font-weight:bold;letter-spacing:0.8px">45</div>
<div class="t" style="left:374px;top:760px;font-weight:bold">8</div>
<div class="t" style="left:414px;top:760px;">Тиражный цех</div>
<div class="t" style="left:716px;top:760px;">2008</div>
<div class="t" style="left:776px;top:760px;">Коцкало Е.Г.</div>
<div class="t" style="left:982px;top:760px;letter-spacing:0.15px">05.04.2010</div>
<div style="left:1046px;top:758px;width:14px;height:14px;background:#fff;border-top:2px solid #5a5a5a;border-left:2px solid #5a5a5a;border-right:1px solid #dcdcdc;border-bottom:1px solid #dcdcdc"><svg width="7" height="7" style="left:2px;top:1px" shape-rendering="crispEdges" fill="#000"><rect x="6" y="0" width="1" height="1"/><rect x="5" y="1" width="1" height="1"/><rect x="6" y="1" width="1" height="1"/><rect x="0" y="2" width="1" height="1"/><rect x="4" y="2" width="1" height="1"/><rect x="5" y="2" width="1" height="1"/><rect x="6" y="2" width="1" height="1"/><rect x="0" y="3" width="1" height="1"/><rect x="1" y="3" width="1" height="1"/><rect x="3" y="3" width="1" height="1"/><rect x="4" y="3" width="1" height="1"/><rect x="5" y="3" width="1" height="1"/><rect x="0" y="4" width="1" height="1"/><rect x="1" y="4" width="1" height="1"/><rect x="2" y="4" width="1" height="1"/><rect x="3" y="4" width="1" height="1"/><rect x="4" y="4" width="1" height="1"/><rect x="1" y="5" width="1" height="1"/><rect x="2" y="5" width="1" height="1"/><rect x="3" y="5" width="1" height="1"/><rect x="2" y="6" width="1" height="1"/></svg></div>
<div style="left:412px;top:609px;width:300px;height:20px;background:#b4c7e6"></div>
<div class="t" style="left:414px;top:613px;">АХО</div>
<div style="left:0px;top:996px;width:1280px;height:28px;background:#d4d0c8"></div>
<div style="left:0px;top:996px;width:1280px;height:1px;background:#e4e2dc"></div>
<div style="left:0px;top:997px;width:1280px;height:1px;background:#ffffff"></div>
<div class="btn" style="left:2px;top:1000px;width:51px;height:22px"></div>
<div style="left:5px;top:1002px;width:16px;height:16px;"><svg width="16" height="16"><path d="M2 3 Q5 1 8 3 L7 8 Q4 6 1 8Z" fill="#e8601c"/><path d="M9 3 Q12 1 15 3 L14 8 Q11 6 8 8Z" fill="#58a828"/><path d="M1 9 Q4 7 7 9 L6 14 Q3 12 0 14Z" fill="#2a7ee0"/><path d="M8 9 Q11 7 14 9 L13 14 Q10 12 7 14Z" fill="#f4c010"/></svg></div>
<div class="t" style="left:21px;top:1004px;font-weight:bold;letter-spacing:0.5px">Пуск</div>
<div style="left:59px;top:1002px;width:1px;height:18px;background:#ffffff"></div>
<div style="left:60px;top:1002px;width:1px;height:18px;background:#d4d0c8"></div>
<div style="left:61px;top:1002px;width:1px;height:18px;background:#808080"></div>
<div style="left:120px;top:1002px;width:1px;height:18px;background:#ffffff"></div>
<div style="left:121px;top:1002px;width:1px;height:18px;background:#d4d0c8"></div>
<div style="left:122px;top:1002px;width:1px;height:18px;background:#808080"></div>
<div style="left:1066px;top:1002px;width:1px;height:18px;background:#ffffff"></div>
<div style="left:1067px;top:1002px;width:1px;height:18px;background:#d4d0c8"></div>
<div style="left:1068px;top:1002px;width:1px;height:18px;background:#808080"></div>
<div style="left:1097px;top:1002px;width:1px;height:18px;background:#ffffff"></div>
<div style="left:1098px;top:1002px;width:1px;height:18px;background:#d4d0c8"></div>
<div style="left:1099px;top:1002px;width:1px;height:18px;background:#808080"></div>
<div style="left:71px;top:1005px;width:15px;height:13px;"><svg width="15" height="13"><rect x="0.5" y="0.5" width="14" height="10" fill="#3a6cd8" stroke="#1a3a90"/><rect x="2" y="2" width="11" height="7" fill="#5a8ef0"/><rect x="0" y="10" width="15" height="2" fill="#203880"/><rect x="3" y="10" width="1" height="1" fill="#fff"/></svg></div>
<div class="t" style="left:104px;top:1001px;font-weight:bold;font-size:14px;transform:scaleX(1.5);transform-origin:0 0">»</div>
<div class="btn" style="left:127px;top:1000px;width:100px;height:22px"></div>
<div style="left:131px;top:1002px;width:16px;height:16px;"><svg width="16" height="16"><path d="M1 5 L6 4 L12 4 L12 15 L1 15Z" fill="#f0c850"/><path d="M1 5 L1 15 L4 15 L4 6Z" fill="#fce9a0"/><path d="M9 1 L15 7 L12 7 L12 11 L8 11 L8 7 L5 7Z" fill="#30c030" stroke="#208020" stroke-width="0.6"/></svg></div>
<div class="t" style="left:151px;top:1005px;">LabelPrint</div>
<div class="btn" style="left:230px;top:1000px;width:100px;height:22px"></div>
<div style="left:234px;top:1002px;width:16px;height:16px;"><svg width="16" height="16"><path d="M1 2 Q6 0 9 2 L7 5 L6 14 Q4 15 2 14 L4 5 Q2 4 1 2Z" fill="#e0b040"/><circle cx="10.5" cy="8" r="4" fill="#20a0a0" stroke="#105050" stroke-width="1"/></svg></div>
<div class="t" style="left:254px;top:1005px;">Delphi 7</div>
<div class="btn" style="left:333px;top:1000px;width:100px;height:22px"></div>
<div style="left:337px;top:1002px;width:16px;height:16px;"><svg width="16" height="16"><rect x="2" y="2" width="14" height="14" fill="#d0e4f4"/><path d="M0 5 Q5 0 11 3 Q15 6 16 14 L13 13 Q11 7 6 6 Q3 6 2 9 L0 8Z" fill="#3a6ec0"/><path d="M2 9 L2 15 L8 15 Q6 11 4 10Z" fill="#a8c8e0"/><rect x="2" y="11" width="3" height="4" fill="#e8f0f0" stroke="#607080" stroke-width="0.8"/></svg></div>
<div class="t" style="left:357px;top:1005px;">dbForge Stu...</div>
<div class="btn" style="left:436px;top:1000px;width:100px;height:22px"></div>
<div style="left:440px;top:1002px;width:16px;height:16px;"><svg width="16" height="16"><rect x="2" y="2" width="14" height="14" fill="#d0e4f4"/><path d="M0 5 Q5 0 11 3 Q15 6 16 14 L13 13 Q11 7 6 6 Q3 6 2 9 L0 8Z" fill="#3a6ec0"/><path d="M2 9 L2 15 L8 15 Q6 11 4 10Z" fill="#a8c8e0"/><rect x="2" y="11" width="3" height="4" fill="#e8f0f0" stroke="#607080" stroke-width="0.8"/></svg></div>
<div class="t" style="left:460px;top:1005px;">dbForge Stu...</div>
<div class="btn" style="left:540px;top:1000px;width:100px;height:22px"></div>
<div style="left:544px;top:1002px;width:16px;height:16px;"><svg width="16" height="16"><circle cx="8" cy="8" r="7.5" fill="#f4c820"/><path d="M8 8 L1.5 4.25 A7.5 7.5 0 0 1 14.5 4.25Z" fill="#d82020"/><path d="M8 8 L1.5 4.25 A7.5 7.5 0 0 0 8 15.5Z" fill="#38a038"/><circle cx="8" cy="8" r="3.6" fill="#fff"/><circle cx="8" cy="8" r="2.6" fill="#2a7ad8"/></svg></div>
<div class="t" style="left:564px;top:1005px;">Aleksey Osip...</div>
<div class="btn" style="left:644px;top:1000px;width:100px;height:22px"></div>
<div style="left:648px;top:1002px;width:16px;height:16px;"><svg width="16" height="16"><circle cx="8" cy="8" r="7.5" fill="#e07818"/><circle cx="9" cy="7" r="4.5" fill="#2a68b8"/><path d="M2 4 Q4 12 12 12 Q9 15 5 13 Q1 10 2 4Z" fill="#f09a28"/><circle cx="8" cy="8" r="7.2" fill="none" stroke="#a04810" stroke-width="0.8"/></svg></div>
<div class="t" style="left:668px;top:1005px;">AW - Mozilla ...</div>
<div class="btn" style="left:747px;top:1000px;width:100px;height:22px"></div>
<div style="left:751px;top:1002px;width:16px;height:16px;"><svg width="16" height="16"><path d="M1 5 L6 4 L12 4 L12 15 L1 15Z" fill="#f0c850"/><path d="M1 5 L1 15 L4 15 L4 6Z" fill="#fce9a0"/><path d="M9 1 L15 7 L12 7 L12 11 L8 11 L8 7 L5 7Z" fill="#30c030" stroke="#208020" stroke-width="0.6"/></svg></div>
<div class="t" style="left:771px;top:1005px;">Accent_SQL</div>
<div class="btn" style="left:851px;top:1000px;width:100px;height:22px"></div>
<div style="left:855px;top:1002px;width:16px;height:16px;"><svg width="16" height="16"><path d="M1 5 L6 4 L12 4 L12 15 L1 15Z" fill="#f0c850"/><path d="M1 5 L1 15 L4 15 L4 6Z" fill="#fce9a0"/><path d="M9 1 L15 7 L12 7 L12 11 L8 11 L8 7 L5 7Z" fill="#30c030" stroke="#208020" stroke-width="0.6"/></svg></div>
<div class="t" style="left:875px;top:1005px;">D2005</div>
<div style="left:955px;top:1000px;width:101px;height:22px;background:#ebe9e5;border-top:1px solid #404040;border-left:1px solid #404040;border-right:1px solid #fff;border-bottom:1px solid #fff;box-shadow:inset 1px 1px 0 #808080"></div>
<div style="left:960px;top:1003px;width:16px;height:16px;"><svg width="16" height="16"><circle cx="8" cy="8" r="7.3" fill="#b4a8a8" stroke="#2a2a2a" stroke-width="1.1" stroke-dasharray="1.2 1.2"/><path d="M4.5 13.5 A6 6 0 0 1 9 2" stroke="#f6f2f2" stroke-width="2.4" fill="none"/><rect x="5.5" y="4" width="6" height="9" fill="#d8b0a8"/><path d="M6.5 13 V4.8 H11 V11" stroke="#5a1810" stroke-width="1.4" fill="none"/><path d="M8.5 6 V12" stroke="#8a3020" stroke-width="1" fill="none"/><rect x="12" y="12" width="2" height="2" fill="#f0e8c0"/></svg></div>
<div class="t" style="left:980px;top:1005px;font-weight:bold;letter-spacing:0.4px">Plan_prikaz</div>
<div class="t" style="left:1077px;top:1005px;">EN</div>
<div style="left:1101px;top:1000px;width:177px;height:22px;background:#d4d0c8;border-top:1px solid #808080;border-left:1px solid #808080;border-right:1px solid #fff;border-bottom:1px solid #fff"></div>
<div class="t" style="left:1105px;top:1004px;font-weight:bold;font-size:14px;transform:scaleX(1.5);transform-origin:0 0">«</div>
<div style="left:1119px;top:1005px;width:14px;height:12px;background:#f4f4f6;border:1px solid #d0d0d8;box-shadow:0 1px 0 #a0a0a0"><svg width="12" height="10"><circle cx="6" cy="5" r="0.8" fill="#303040"/><path d="M6 1 V2 M6 8 V9 M2 5 H3 M9 5 H10" stroke="#8080a0" stroke-width="1"/></svg></div>
<div style="left:1129px;top:1001px;width:6px;height:6px;border-radius:50%;background:#e03030;border:1px solid #f0a0a0"></div>
<div style="left:1155px;top:1003px;width:16px;height:15px;"><svg width="16" height="15"><g fill="#40b030"><circle cx="8" cy="3" r="3"/><circle cx="3.5" cy="6" r="3"/><circle cx="12.5" cy="6" r="3"/><circle cx="5" cy="11.5" r="3"/><circle cx="11" cy="11.5" r="3"/></g><ellipse cx="8" cy="7.5" rx="4.5" ry="3.2" fill="#f0f020"/><path d="M6 7.5 Q8 9.5 10 7.5" stroke="#806000" fill="none" stroke-width="0.8"/></svg></div>
<div style="left:1173px;top:1003px;width:16px;height:16px;"><svg width="16" height="16"><circle cx="8" cy="8" r="7.5" fill="#d85010"/><circle cx="8" cy="8" r="6" fill="#f08030"/><circle cx="8.5" cy="8.5" r="3.8" fill="#fff"/><circle cx="8.5" cy="8.5" r="2" fill="#f07020"/></svg></div>
<div style="left:1201px;top:1003px;width:16px;height:16px;"><svg width="16" height="16" shape-rendering="crispEdges"><rect x="5" y="0" width="10" height="9" fill="#fff" stroke="#203060"/><rect x="6" y="1" width="8" height="6" fill="#1a4aa0"/><rect x="0" y="5" width="10" height="9" fill="#fff" stroke="#203060"/><rect x="1" y="6" width="8" height="6" fill="#1a58b8"/><rect x="2" y="14" width="6" height="2" fill="#a0a0a0"/></svg></div>
<div style="left:1219px;top:1003px;width:17px;height:16px;"><svg width="17" height="16"><path d="M1 5 L4 5 L8 1 L8 15 L4 11 L1 11Z" fill="#f0f0f0" stroke="#606060" stroke-width="1"/><path d="M10 6 Q11.5 8 10 10 M12 4 Q14.5 8 12 12 M14 2 Q17.5 8 14 14" stroke="#209050" fill="none" stroke-width="1"/></svg></div>
<div class="t" style="left:1243px;top:1005px;">15:17</div>
</div></body></html>
